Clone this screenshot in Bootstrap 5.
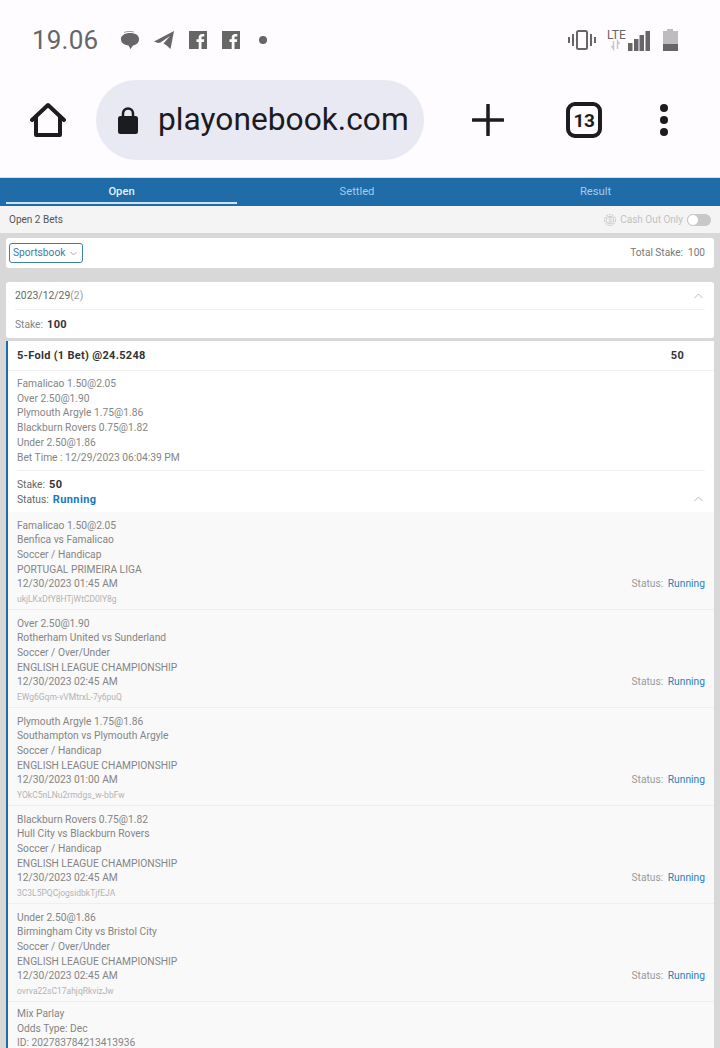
<!DOCTYPE html>
<html lang="en">
<head>
    <meta charset="UTF-8">
    <meta name="viewport" content="width=device-width, initial-scale=1.0">
    <title>Open Bets</title>
    <link href="https://cdn.jsdelivr.net/npm/bootstrap@5.3.3/dist/css/bootstrap.min.css" rel="stylesheet">
    <style>
        html, body { height: 1048px; overflow: hidden; }
        body { font-family: Roboto, "Liberation Sans", sans-serif; background: #d8d8d8; color: #858585; font-size: 10.25px; }

        .phone-top { background: #fffcff; height: 177px; }
        .status-line { height: 80px; padding: 0 42px 0 32px; color: #666; }
        .status-time { font-size: 26px; letter-spacing: .2px; width: 74px; line-height: 1; }
        .status-left { gap: 15px; }
        .status-right { gap: 11px; }
        .battery-icon { margin-left: 2px; }
        .url-line { height: 80px; padding-left: 30px; }
        .url-pill { width: 328px; height: 80px; margin-left: 30px; background: #e8e9f3; border-radius: 40px; padding-left: 22px; color: #1c1b1f; font-size: 31.7px; gap: 20px; letter-spacing: .02px; }
        .url-actions { padding-left: 48px; }
        .url-actions .tab-count { margin: 0 58px 0 62px; }

        .bet-tabs { background: #1f6ca8; height: 28px; border-top: 1px solid #d8dbe6; padding: 0 6px; box-sizing: content-box; }
        .tab-item { color: #a9cbe4; font-size: 11.2px; text-align: center; line-height: 26px; padding-top: 1px; height: 26px; }
        .tab-item.is-open { width: 231px; color: #e6f1f8; font-weight: 500; border-bottom: 2px solid #cfe2f0; }
        .tab-item.is-settled { width: 240px; }
        .tab-item.is-result { width: 237px; }

        .open-bar { height: 27px; background: #f4f4f4; padding: 0 9px; color: #555; font-size: 10px; }
        .cash-only { color: #c2c2c2; gap: 4px; }
        .cash-toggle { width: 24px; height: 12px; border-radius: 6px; background: #c8c8c8; position: relative; }
        .cash-toggle::before { content: ""; position: absolute; left: 0; top: 0; width: 12px; height: 12px; border-radius: 50%; background: #fff; border: 1px solid #c8c8c8; }

        .page-pad { padding: 5px 6px 0; }
        .pane { background: #fff; border-radius: 3px; }
        .filter-pane { height: 30px; padding: 0 9px 0 3px; font-size: 10.1px; color: #777; }
        .book-pick { border: 1px solid #3f7fa8; border-radius: 3px; height: 20px; width: 74px; padding: 0 3px; color: #3c7ba6; font-size: 10.2px; gap: 5px; }
        .day-pane { margin-top: 14px; height: 56px; padding: 0 9px; }
        .day-top { height: 28px; border-bottom: 1px solid #f1f1f1; color: #666; font-size: 10.4px; }
        .day-count { color: #999; }
        .day-stake { height: 27px; padding-top: 3px; }
        .chev-up { margin-right: 2px; }
        .chev-leg { align-self: flex-end; margin-bottom: 10px; }
        .strong-num { color: #333; font-weight: 700; font-size: 11px; letter-spacing: .3px; margin-left: 4px; }

        .slip { margin-top: 3px; background: #fff; border-left: 2px solid #1f6ca8; height: 800px; }
        .slip-head { height: 28px; padding: 1px 30px 0 9px; border-bottom: 1px solid #f2f2f2; color: #333; font-weight: 700; font-size: 11px; letter-spacing: .3px; box-sizing: content-box; }
        .slip-body { padding: 0 9px; }
        .slip-picks { padding: 6px 0 5px; border-bottom: 1px solid #f1f1f1; line-height: 14.7px; height: 100px; }
        .slip-stake { height: 41px; padding-top: 6px; line-height: 15px; color: #666; }
        .run-strong { color: #1a78c2; font-weight: 700; font-size: 11px; letter-spacing: .4px; margin-left: 4px; }
        .leg-list { background: #f9f9f9; }
        .leg-row { height: 98px; padding: 6.5px 9px 0; border-bottom: 1px solid #eee; line-height: 14.7px; }
        .leg-code { color: #b4b4b4; font-size: 8.5px; }
        .leg-status { align-self: flex-end; margin-bottom: 17px; color: #999; }
        .run-plain { color: #2b7fbd; margin-left: 2px; }
        .leg-foot { padding: 5px 9px; line-height: 14.7px; }
    </style>
</head>
<body>
    <div class="phone-top">
        <div class="status-line d-flex align-items-center justify-content-between">
            <div class="d-flex align-items-center status-left">
                <span class="status-time">19.06</span>
                <svg width="18" height="18" viewBox="0 0 18 18" fill="#666"><path d="M0 8c0-4 4-6 9-6s9 2 9 6-3 6-6 6.500L9.500 18l-2-3.500C3 14 0 12 0 8z"/><path d="M1 4.500C3 2 6 1 9 1h5" stroke="#fffcff" stroke-width="1" fill="none"/><path d="M3 1.500C5 .500 9 0 13 1" stroke="#999" stroke-width="1" fill="none"/></svg>
                <svg width="20" height="18" viewBox="0 0 20 18" fill="#666"><path d="M0 10.500 20 0 16.500 18 12 14l-2.500-1.500L16 5 6.500 11.500 4 12z"/></svg>
                <svg width="18" height="18" viewBox="0 0 18 18"><path fill="#666" d="M0 0h18v18H0z"/><path fill="#fffcff" d="M12.500 18v-7h2.300l.4-2.800h-2.700V6.700c0-.8.3-1.300 1.400-1.300h1.400V3c-.4 0-1.200-.1-2-.1-2.200 0-3.600 1.300-3.600 3.600v1.700H7.500V11h2.200v7z"/></svg>
                <svg width="18" height="18" viewBox="0 0 18 18"><path fill="#666" d="M0 0h18v18H0z"/><path fill="#fffcff" d="M12.500 18v-7h2.300l.4-2.800h-2.700V6.700c0-.8.3-1.300 1.400-1.300h1.400V3c-.4 0-1.200-.1-2-.1-2.200 0-3.600 1.300-3.600 3.600v1.700H7.500V11h2.200v7z"/></svg>
                <svg class="ms-1" width="8" height="8" viewBox="0 0 8 8"><circle cx="4" cy="4" r="4" fill="#666"/></svg>
            </div>
            <div class="d-flex align-items-center status-right">
                <svg width="28" height="20" viewBox="0 0 28 20" fill="none" stroke="#666"><rect x="9" y="1" width="10" height="18" rx="1.500" stroke-width="2"/><path d="M1 7v6M5 4v12M23 4v12M27 7v6" stroke-width="2"/></svg>
                <div class="d-flex align-items-end">
                    <svg width="21" height="22" viewBox="0 0 21 22"><text x="0" y="10" font-family="Roboto, sans-serif" font-size="12" fill="#666">LTE</text><path d="M6.500 12v8l-2-3M10.500 20v-8l2 3" stroke="#c8c8c8" stroke-width="1.500" fill="none"/></svg>
                    <svg width="22" height="20" viewBox="0 0 22 20" fill="#666"><path d="M0 12h4.500v8H0zM6 8h4.500v12H6zM11.500 4H16v16h-4.500zM17.500 0H22v20h-4.500z"/></svg>
                </div>
                <svg class="battery-icon" width="15" height="22" viewBox="0 0 15 22"><path fill="#bdbdbd" d="M4 0h6v2h5v14H0V2h4z"/><path fill="#666" d="M0 15h15v7H0z"/></svg>
            </div>
        </div>
        <div class="url-line d-flex align-items-center">
            <svg width="36" height="36" viewBox="0 0 36 36" fill="none" stroke="#1c1b1f" stroke-width="4" stroke-linejoin="round" stroke-linecap="round"><path d="M2 18 18 3l16 15M6 15.500V33h24V15.500"/></svg>
            <div class="url-pill d-flex align-items-center">
                <svg width="20" height="27" viewBox="0 0 20 27"><path fill="#1c1b1f" d="M2.500 9h15A2.500 2.500 0 0 1 20 11.500v13a2.500 2.500 0 0 1-2.500 2.500h-15A2.500 2.500 0 0 1 0 24.500v-13A2.500 2.500 0 0 1 2.500 9z"/><path fill="none" stroke="#1c1b1f" stroke-width="2.500" d="M5 10V6.500a5 5 0 0 1 10 0V10"/></svg>
                <span>playonebook.com</span>
            </div>
            <div class="url-actions d-flex align-items-center">
                <svg width="32" height="32" viewBox="0 0 32 32" stroke="#1c1b1f" stroke-width="3.500" stroke-linecap="round"><path d="M16 1v30M1 16h30"/></svg>
                <svg class="tab-count" width="36" height="36" viewBox="0 0 36 36"><rect x="2" y="2" width="32" height="32" rx="7" fill="none" stroke="#1c1b1f" stroke-width="4"/><text x="18" y="25" text-anchor="middle" font-family="Roboto, sans-serif" font-weight="700" font-size="19" letter-spacing="-.5" fill="#1c1b1f">13</text></svg>
                <svg width="8" height="32" viewBox="0 0 8 32" fill="#1c1b1f"><circle cx="4" cy="4" r="4"/><circle cx="4" cy="16" r="4"/><circle cx="4" cy="28" r="4"/></svg>
            </div>
        </div>
    </div>

    <div class="bet-tabs d-flex">
        <div class="tab-item is-open">Open</div>
        <div class="tab-item is-settled">Settled</div>
        <div class="tab-item is-result">Result</div>
    </div>
    <div class="open-bar d-flex align-items-center justify-content-between">
        <span>Open 2 Bets</span>
        <div class="cash-only d-flex align-items-center">
            <svg width="12" height="12" viewBox="0 0 12 12" fill="none" stroke="#c2c2c2"><circle cx="6" cy="6" r="5.500" stroke-dasharray="2 1"/><circle cx="6" cy="6" r="3.800" stroke-width=".8"/><text x="6" y="8.300" text-anchor="middle" font-family="Roboto, sans-serif" font-size="6.500" fill="#c2c2c2" stroke="none">$</text></svg>
            <span>Cash Out Only</span>
            <span class="cash-toggle"></span>
        </div>
    </div>

    <div class="page-pad">
        <div class="pane filter-pane d-flex align-items-center justify-content-between">
            <div class="book-pick d-flex align-items-center">
                <span>Sportsbook</span>
                <svg width="7" height="5" viewBox="0 0 7 5" fill="none" stroke="#999" stroke-width=".8"><path d="M.5 1 3.500 4l3-3"/></svg>
            </div>
            <span>Total Stake:&nbsp; 100</span>
        </div>

        <div class="pane day-pane">
            <div class="day-top d-flex align-items-center justify-content-between">
                <span>2023/12/29<span class="day-count">(2)</span></span>
                <svg class="chev-up" width="9" height="6" viewBox="0 0 9 6" fill="none" stroke="#aaa" stroke-width=".8"><path d="M.5 5 4.500 1l4 4"/></svg>
            </div>
            <div class="day-stake d-flex align-items-center"><span>Stake:</span><span class="strong-num">100</span></div>
        </div>

        <div class="slip">
            <div class="slip-head d-flex align-items-center justify-content-between">
                <span>5-Fold (1 Bet) @24.5248</span>
                <span>50</span>
            </div>
            <div class="slip-body">
                <div class="slip-picks">
                    <div>Famalicao 1.50@2.05</div>
                    <div>Over 2.50@1.90</div>
                    <div>Plymouth Argyle 1.75@1.86</div>
                    <div>Blackburn Rovers 0.75@1.82</div>
                    <div>Under 2.50@1.86</div>
                    <div>Bet Time : 12/29/2023 06:04:39 PM</div>
                </div>
                <div class="slip-stake d-flex justify-content-between">
                    <div>
                        <div>Stake:<span class="strong-num">50</span></div>
                        <div>Status:<span class="run-strong">Running</span></div>
                    </div>
                    <svg class="chev-up chev-leg" width="9" height="6" viewBox="0 0 9 6" fill="none" stroke="#aaa" stroke-width=".8"><path d="M.5 5 4.500 1l4 4"/></svg>
                </div>
            </div>
            <div class="leg-list">
                <div class="leg-row d-flex justify-content-between">
                    <div>
                        <div>Famalicao 1.50@2.05</div>
                        <div>Benfica vs Famalicao</div>
                        <div>Soccer / Handicap</div>
                        <div>PORTUGAL PRIMEIRA LIGA</div>
                        <div>12/30/2023 01:45 AM</div>
                        <div class="leg-code">ukjLKxDfY8HTjWtCD0lY8g</div>
                    </div>
                    <div class="leg-status">Status: <span class="run-plain">Running</span></div>
                </div>
                <div class="leg-row d-flex justify-content-between">
                    <div>
                        <div>Over 2.50@1.90</div>
                        <div>Rotherham United vs Sunderland</div>
                        <div>Soccer / Over/Under</div>
                        <div>ENGLISH LEAGUE CHAMPIONSHIP</div>
                        <div>12/30/2023 02:45 AM</div>
                        <div class="leg-code">EWg6Gqm-vVMtrxL-7y6puQ</div>
                    </div>
                    <div class="leg-status">Status: <span class="run-plain">Running</span></div>
                </div>
                <div class="leg-row d-flex justify-content-between">
                    <div>
                        <div>Plymouth Argyle 1.75@1.86</div>
                        <div>Southampton vs Plymouth Argyle</div>
                        <div>Soccer / Handicap</div>
                        <div>ENGLISH LEAGUE CHAMPIONSHIP</div>
                        <div>12/30/2023 01:00 AM</div>
                        <div class="leg-code">YOkC5nLNu2rmdgs_w-bbFw</div>
                    </div>
                    <div class="leg-status">Status: <span class="run-plain">Running</span></div>
                </div>
                <div class="leg-row d-flex justify-content-between">
                    <div>
                        <div>Blackburn Rovers 0.75@1.82</div>
                        <div>Hull City vs Blackburn Rovers</div>
                        <div>Soccer / Handicap</div>
                        <div>ENGLISH LEAGUE CHAMPIONSHIP</div>
                        <div>12/30/2023 02:45 AM</div>
                        <div class="leg-code">3C3L5PQCjogsidbkTjfEJA</div>
                    </div>
                    <div class="leg-status">Status: <span class="run-plain">Running</span></div>
                </div>
                <div class="leg-row d-flex justify-content-between">
                    <div>
                        <div>Under 2.50@1.86</div>
                        <div>Birmingham City vs Bristol City</div>
                        <div>Soccer / Over/Under</div>
                        <div>ENGLISH LEAGUE CHAMPIONSHIP</div>
                        <div>12/30/2023 02:45 AM</div>
                        <div class="leg-code">ovrva22sC17ahjqRkvizJw</div>
                    </div>
                    <div class="leg-status">Status: <span class="run-plain">Running</span></div>
                </div>
                <div class="leg-foot">
                    <div>Mix Parlay</div>
                    <div>Odds Type: Dec</div>
                    <div>ID: 202783784213413936</div>
                </div>
            </div>
        </div>
    </div>

    <script src="https://cdn.jsdelivr.net/npm/bootstrap@5.3.3/dist/js/bootstrap.bundle.min.js"></script>
</body>
</html>
